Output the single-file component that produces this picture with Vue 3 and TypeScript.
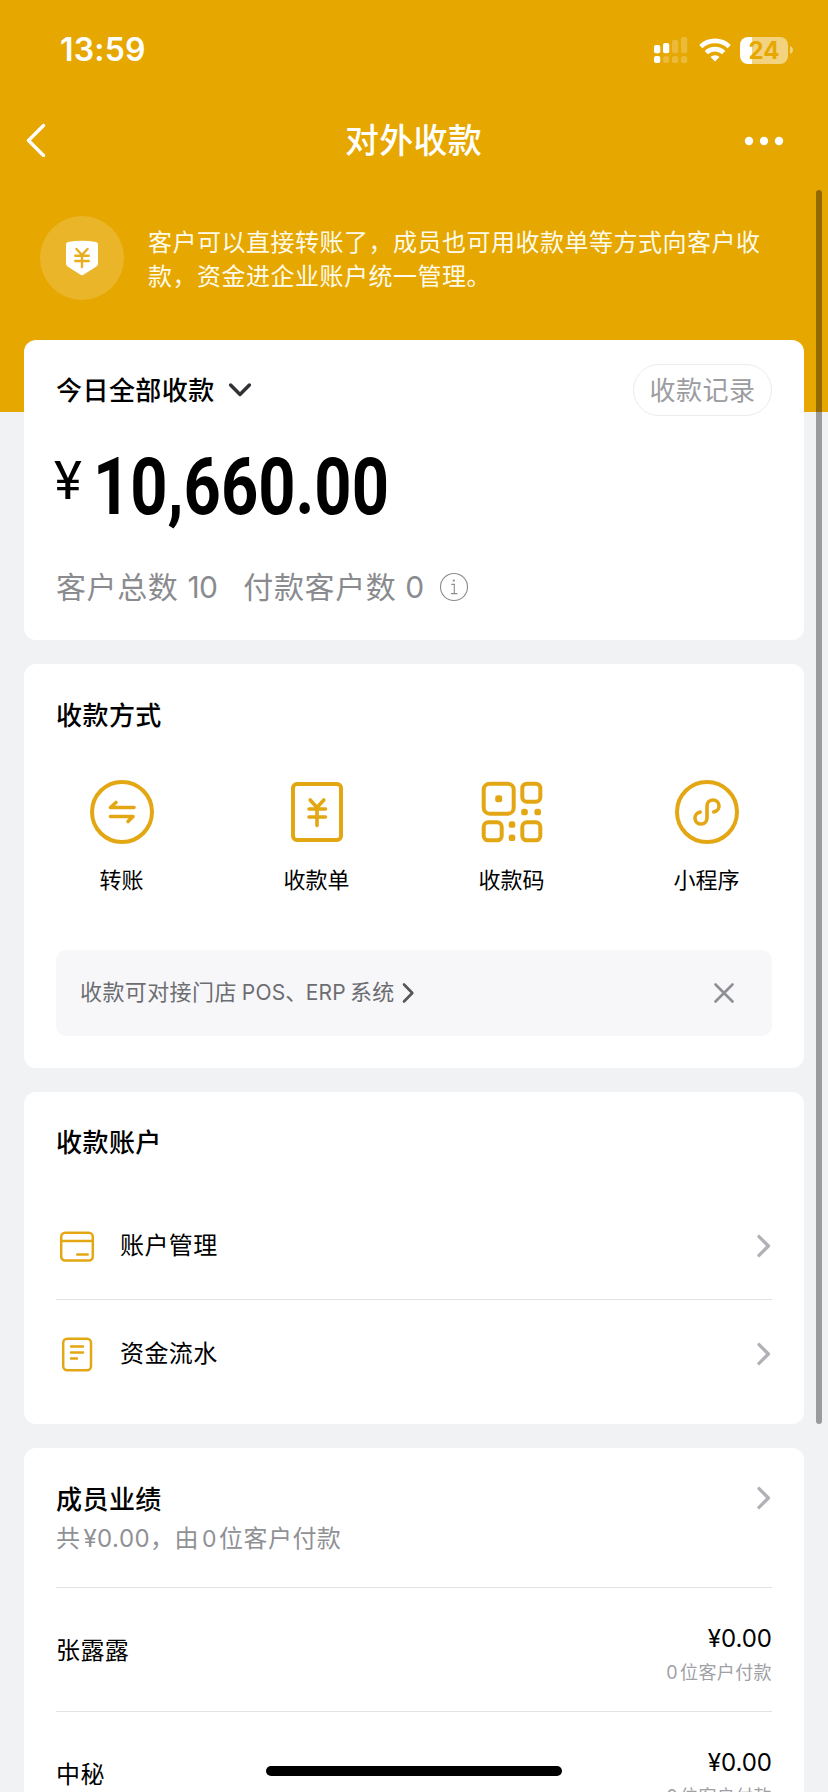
<script setup lang="ts">
interface Method { icon: string; label: string }
interface Entry { icon: string; label: string }
interface Member { name: string; amount: string; customers: number }

const methods: Method[] = [
  { icon: 'transfer', label: '转账' },
  { icon: 'bill', label: '收款单' },
  { icon: 'qr', label: '收款码' },
  { icon: 'mini', label: '小程序' },
]
const entries: Entry[] = [
  { icon: 'card', label: '账户管理' },
  { icon: 'doc', label: '资金流水' },
]
const members: Member[] = [
  { name: '张露露', amount: '¥0.00', customers: 0 },
  { name: '中秘', amount: '¥0.00', customers: 0 },
]
</script>

<template>
  <div class="page">
    <header class="status">
      <span class="clock">13:59</span>
      <div class="status-icons">
        <svg class="signal" width="34" height="28" viewBox="0 0 34 28" fill="#fff">
          <rect x="0" y="9" width="6.3" height="8.3" rx="2" />
          <rect x="9" y="7" width="6.3" height="10.3" rx="2" />
          <g opacity=".22">
            <rect x="18" y="4" width="6.3" height="13.3" rx="2" />
            <rect x="27" y="1" width="6.3" height="16.3" rx="2" />
            <rect x="9" y="20" width="6.3" height="7" rx="2.6" />
            <rect x="18" y="20" width="6.3" height="7" rx="2.6" />
            <rect x="27" y="20" width="6.3" height="7" rx="2.6" />
          </g>
          <rect x="0" y="20" width="6.3" height="7" rx="2" />
        </svg>
        <svg class="wifi" width="32" height="24" viewBox="0 0 32 24" fill="none" stroke="#fff" stroke-width="4.6">
          <path d="M1.8 8.6a20.5 20.5 0 0 1 28.4 0" />
          <path d="M7.3 14.6a12.6 12.6 0 0 1 17.4 0" />
          <path d="M16 23.6l-4.5-4.6a6.4 6.4 0 0 1 9 0z" fill="#fff" stroke="none" />
        </svg>
        <div class="battery"><span>24</span></div>
        <svg width="4" height="8" viewBox="0 0 4 8" fill="#fff" opacity=".5"><path d="M0 0c4 1.5 4 6.500 0 8z" /></svg>
      </div>
    </header>

    <nav class="nav">
      <svg width="20" height="34" viewBox="0 0 20 34" fill="none" stroke="#fff" stroke-width="3.400" stroke-linecap="round" stroke-linejoin="round"><path d="M17.500 2.500L2.500 17.500l15 15" /></svg>
      <h1>对外收款</h1>
      <svg class="more" width="40" height="10" viewBox="0 0 40 10" fill="#fff"><circle cx="5" cy="5" r="4.200" /><circle cx="20" cy="5" r="4.200" /><circle cx="35" cy="5" r="4.200" /></svg>
    </nav>

    <section class="notice">
      <div class="badge">
        <svg width="34" height="36" viewBox="0 0 34 36">
          <path d="M1 4.500Q1 2.500 3 2.100Q17 -.6 31 2.100Q33 2.500 33 4.500V23.500Q33 25.500 31.400 26.500L18.500 34.800Q17 35.700 15.500 34.800L2.600 26.500Q1 25.500 1 23.500Z" fill="#fff" />
          <path d="M11.500 9l5.500 6 5.500-6M17 15v12M10.300 15.800h13.400M10.300 21h13.400" fill="none" stroke="#e8ae20" stroke-width="2.400" stroke-linecap="round" />
        </svg>
      </div>
      <p>客户可以直接转账了，成员也可用收款单等方式向客户收<br>款，资金进企业账户统一管理。</p>
    </section>

    <main class="cards">
      <section class="card summary">
        <div class="summary-head">
          <h2>今日全部收款</h2>
          <svg class="down" width="24" height="16" viewBox="0 0 24 16" fill="none" stroke="#303236" stroke-width="3.500" stroke-linecap="round" stroke-linejoin="round"><path d="M2.600 3L12 12.500 21.400 3" /></svg>
          <button class="pill">收款记录</button>
        </div>
        <div class="amount"><span class="yen">¥</span><span class="digits">10,660.00</span></div>
        <div class="stats">
          <span>客户总数</span><b>10</b><span class="second">付款客户数</span><b>0</b>
          <svg width="30" height="30" viewBox="0 0 30 30" fill="none" stroke="#8b8c90" stroke-width="1.100"><circle cx="15" cy="15" r="13.500" /><path d="M12.300 12.400h3v9M12 21.600h6.400" /><circle cx="14.800" cy="8.600" r="1.100" fill="#8b8c90" stroke="none" /></svg>
        </div>
      </section>

      <section class="card ways">
        <h2>收款方式</h2>
        <div class="methods">
          <div v-for="m in methods" :key="m.label" class="method">
            <svg width="66" height="66" viewBox="0 0 66 66" fill="none" stroke="#e4a714" stroke-width="4" stroke-linecap="round" stroke-linejoin="round">
              <template v-if="m.icon === 'transfer'">
                <circle cx="33" cy="33" r="30" />
                <path d="M45 28.500H21.500L27 23.500M21.500 37.500H44L39 42.500" stroke-width="3.600" />
              </template>
              <template v-else-if="m.icon === 'bill'">
                <rect x="9" y="5" width="48" height="56" rx="4" />
                <path d="M26.200 21L33 28.500 39.800 21M33 29v17.500M25 30h16.500M25 38h16.500" stroke-width="3.600" />
              </template>
              <template v-else-if="m.icon === 'qr'">
                <rect x="4.700" y="4.700" width="30" height="30" rx="6" />
                <rect x="43.300" y="4.700" width="18" height="18" rx="4.500" />
                <rect x="4.700" y="43.300" width="18" height="18" rx="4.500" />
                <rect x="43.300" y="43.300" width="18" height="18" rx="4.500" />
                <g fill="#e4a714" stroke="none">
                  <rect x="16.200" y="16.200" width="7" height="7" rx="2.500" />
                  <rect x="42.200" y="29.700" width="6.600" height="6.600" rx="2.600" />
                  <rect x="55.400" y="29.700" width="6.600" height="6.600" rx="2.600" />
                  <rect x="29.700" y="42.200" width="6.600" height="6.600" rx="2.600" />
                  <rect x="29.700" y="55.400" width="6.600" height="6.600" rx="2.600" />
                </g>
              </template>
              <template v-else>
                <circle cx="33" cy="33" r="30" />
                <path d="M26.200 33.100A6 6 0 1 0 33 39V27A6 6 0 1 1 39.800 32.900" stroke-width="3.600" />
              </template>
            </svg>
            <span>{{ m.label }}</span>
          </div>
        </div>
        <div class="banner">
          <span>收款可对接门店<i>POS</i>、<i class="erp">ERP</i>系统</span>
          <svg width="14" height="22" viewBox="0 0 14 22" fill="none" stroke="#55565a" stroke-width="2.600" stroke-linecap="round" stroke-linejoin="round"><path d="M3 2.500L11.300 11 3 19.500" /></svg>
          <svg class="close" width="22" height="22" viewBox="0 0 22 22" fill="none" stroke="#8e8f93" stroke-width="2.600" stroke-linecap="round"><path d="M2.500 2.500l17 17M19.500 2.500l-17 17" /></svg>
        </div>
      </section>

      <section class="card accounts">
        <h2>收款账户</h2>
        <div v-for="e in entries" :key="e.label" class="entry">
          <svg width="40" height="40" viewBox="0 0 40 40" fill="none" stroke="#e4a714" stroke-width="2.500" stroke-linecap="round">
            <template v-if="e.icon === 'card'">
              <rect x="5.200" y="6.700" width="31.600" height="27.800" rx="4" />
              <path d="M5.200 15h31.600M21.200 28.500h10.500" />
            </template>
            <template v-else>
              <rect x="7.200" y="4.700" width="27.800" height="31.600" rx="4" />
              <path d="M15 12.500h12M15 18.500h12M15 24.500h6" />
            </template>
          </svg>
          <span>{{ e.label }}</span>
          <svg class="chev" width="16" height="26" viewBox="0 0 16 26"><path d="M3 3.600L12.400 13 3 22.400" /></svg>
        </div>
      </section>

      <section class="card people">
        <div class="people-head">
          <div>
            <h2>成员业绩</h2>
            <p>共<i class="money">¥0.00</i>，由<i class="zero">0</i>位客户付款</p>
          </div>
          <svg class="chev" width="16" height="26" viewBox="0 0 16 26"><path d="M3 3.600L12.400 13 3 22.400" /></svg>
        </div>
        <div v-for="p in members" :key="p.name" class="person">
          <span class="name">{{ p.name }}</span>
          <div class="paid">
            <strong>{{ p.amount }}</strong>
            <small><i>{{ p.customers }}</i>位客户付款</small>
          </div>
        </div>
      </section>
    </main>

    <div class="scrollbar"></div>
    <div class="home"></div>
  </div>
</template>

<style>
html, body { margin: 0; overflow: hidden; }
</style>

<style scoped>
* { box-sizing: border-box; }
h1, h2, p { margin: 0; }
i { font-style: normal; }
svg { display: block; flex: none; }
.page {
  position: relative;
  width: 828px;
  height: 1792px;
  overflow: hidden;
  background: linear-gradient(#e6a700 412px, #f0f2f4 412px);
  color: #000;
  font-family: Inter, "Noto Sans CJK SC", sans-serif;
}
.status {
  height: 100px;
  padding: 0 34px 0 60px;
  display: flex;
  justify-content: space-between;
  color: #fff;
}
.clock { font-size: 32px; font-weight: 600; line-height: 100px; letter-spacing: .2px; }
.status-icons { display: flex; align-items: center; height: 100px; }
.wifi { margin: 0 9px 0 11px; }
.battery {
  width: 48px;
  height: 27px;
  margin-right: 2px;
  border-radius: 8px;
  background: linear-gradient(90deg, #fff 12px, rgba(255, 255, 255, .5) 12px);
  color: #e6a700;
  font-size: 24px;
  font-weight: 700;
  line-height: 27px;
  text-align: center;
}
.nav {
  height: 80px;
  padding: 0 44px 0 26px;
  display: flex;
  align-items: center;
  justify-content: space-between;
  color: #fff;
}
.nav h1 { font-size: 34px; font-weight: 500; line-height: 78px; padding-top: 2px; letter-spacing: .2px; margin-left: 37px; }
.nav .more { margin-top: 1px; }
.notice {
  height: 160px;
  padding: 36px 0 0 40px;
  display: flex;
}
.badge {
  width: 84px;
  height: 84px;
  border-radius: 50%;
  background: rgba(255, 255, 255, .16);
  display: flex;
  align-items: center;
  justify-content: center;
}
.notice p {
  margin: 10px 0 0 24px;
  color: #fffbea;
  font-size: 24px;
  line-height: 34px;
  letter-spacing: .5px;
  white-space: nowrap;
}
.cards { padding: 0 24px; display: flex; flex-direction: column; gap: 24px; }
.card { background: #fff; border-radius: 12px; padding: 0 32px; }
.card h2 { height: 40px; padding-top: 1px; font-size: 26px; font-weight: 500; line-height: 40px; letter-spacing: .45px; }
.summary { height: 300px; }
.summary-head { display: flex; align-items: center; padding-top: 24px; }
.down { margin-left: 13px; }
.pill {
  width: 139px;
  height: 52px;
  margin-left: auto;
  padding: 1px 0 0;
  border: 1px solid #ececef;
  border-radius: 26px;
  background: #fff;
  color: #9b9ca0;
  font: 400 26px/49px Inter, "Noto Sans CJK SC", sans-serif;
  letter-spacing: .45px;
}
.amount { display: flex; height: 100px; margin-top: 24px; }
.yen {
  width: 37px;
  margin-top: 11px;
  font: 400 53px/60px Roboto, sans-serif;
  text-indent: -2px;
}
.digits {
  font: 700 79px/94px Roboto, sans-serif;
  transform: scaleX(.823);
  transform-origin: 0 0;
}
.stats { display: flex; align-items: center; height: 40px; margin-top: 27px; color: #8a8b8f; font-size: 30px; letter-spacing: .6px; line-height: 40px; }
.stats b { font-weight: 400; font-size: 30px; margin-left: 9px; letter-spacing: -.6px; }
.stats .second { margin-left: 26px; }
.stats svg { margin-left: 15px; }
.ways { height: 404px; padding-top: 31px; }
.methods { display: grid; grid-template-columns: repeat(4, 195px); margin: 44px 0 0 -32px; }
.method { display: flex; flex-direction: column; align-items: center; font-size: 22px; line-height: 32px; }
.method span { margin-top: 19px; }
.banner {
  height: 86px;
  margin-top: 54px;
  padding: 0 37px 0 24px;
  border-radius: 10px;
  background: #f7f7fa;
  color: #6c6d71;
  font-size: 22px;
  line-height: 32px;
  letter-spacing: .4px;
  display: flex;
  align-items: center;
}
.banner span { margin-top: -2px; }
.banner i { margin: 0 0 0 5px; font-size: 21px; letter-spacing: .2px; }
.banner i.erp { margin: 0 4px 0 -2px; }
.banner svg { margin-left: 6px; }
.banner .close { margin-left: auto; }
.accounts { height: 332px; padding-top: 30px; }
.entry {
  height: 108px;
  display: flex;
  align-items: center;
  font-size: 24px;
  line-height: 34px;
  letter-spacing: .4px;
}
.entry:first-of-type { margin-top: 30px; border-bottom: 1px solid #e2e3e5; }
.entry span { margin-left: 24px; }
.chev { fill: none; stroke: #b0b2b6; stroke-width: 3.4; stroke-linecap: round; stroke-linejoin: round; margin-left: auto; }
.people { height: 420px; }
.people-head { height: 140px; border-bottom: 1px solid #e2e3e5; display: flex; padding-top: 31px; }
.people-head p { padding-top: 1px; color: #909195; font-size: 24px; line-height: 38px; letter-spacing: .46px; white-space: nowrap; }
.people-head .chev { margin-top: 6px; }
.people-head .money { margin-left: 3px; }
.people-head .zero { margin: 0 2px 0 3px; font-size: 23px; }
.person { height: 124px; border-bottom: 1px solid #e2e3e5; display: flex; justify-content: space-between; }
.name { font-size: 24px; letter-spacing: .4px; line-height: 126px; }
.paid { display: flex; flex-direction: column; align-items: flex-end; padding-top: 34px; }
.paid strong { font-size: 24px; font-weight: 400; line-height: 34px; }
.paid small { font-size: 18px; line-height: 34px; letter-spacing: .4px; color: #a0a1a5; }
.paid i { margin-right: 2px; }
.scrollbar { position: absolute; left: 816px; top: 190px; width: 6px; height: 1234px; border-radius: 3px; background: rgba(0, 0, 0, .36); }
.home { position: absolute; left: 266px; top: 1766px; width: 296px; height: 10px; border-radius: 5px; background: #000; }
</style>
